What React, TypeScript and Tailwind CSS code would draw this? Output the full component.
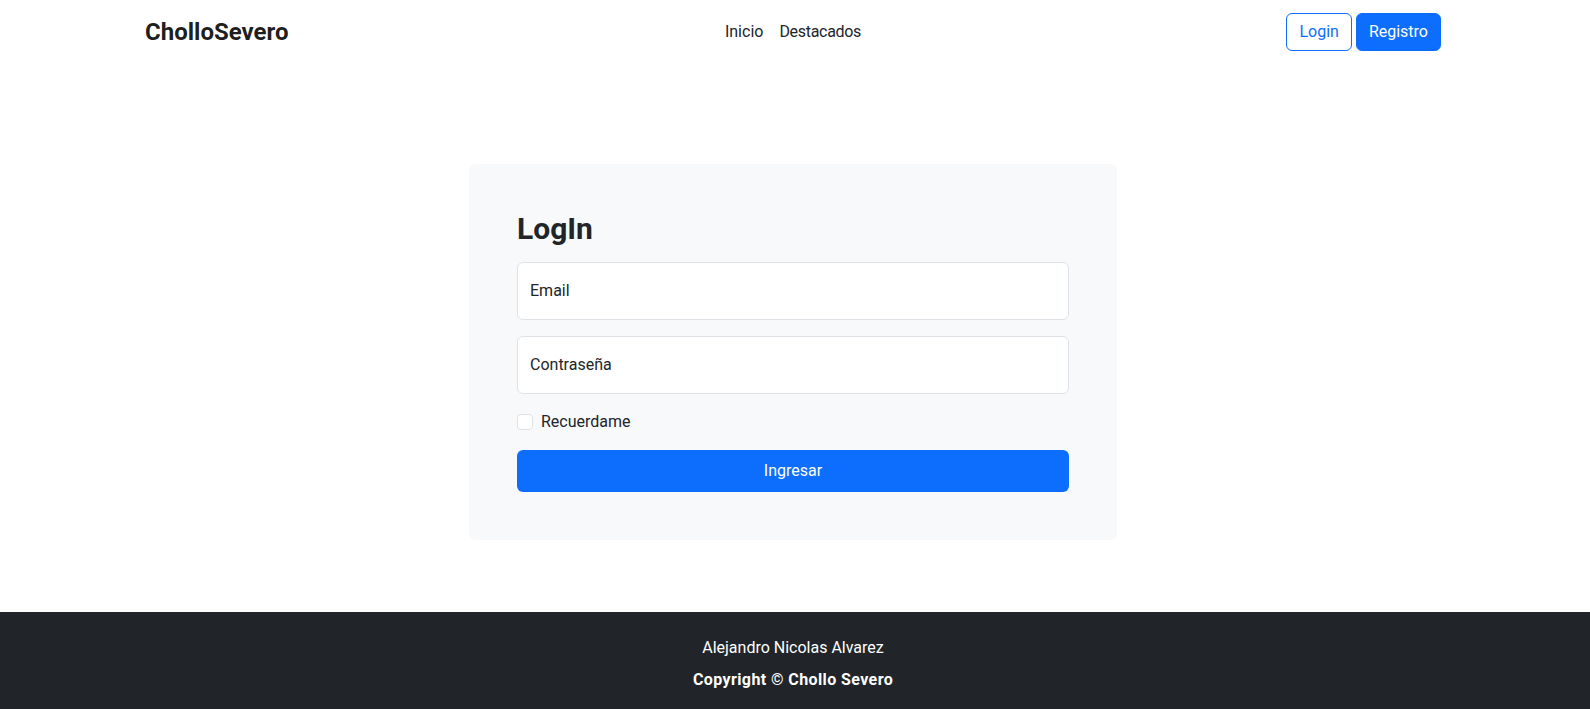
import { useState } from "react";

const font = { fontFamily: '"Segoe UI", Roboto, "Noto Sans", sans-serif' };

function Navbar() {
  return (
    <nav className="bg-white pr-1">
      <div className="mx-auto grid h-16 max-w-[1320px] grid-cols-3 items-center px-3">
        <a href="#" className="text-[24px] font-bold leading-[30px] text-black/90">
          CholloSevero
        </a>
        <ul className="flex items-center justify-center">
          <li>
            <a href="#" className="block px-2 py-2 text-base text-[#212529]">Inicio</a>
          </li>
          <li>
            <a href="#" className="block px-2 py-2 text-base tracking-[-0.3px] text-[#212529]">Destacados</a>
          </li>
        </ul>
        <div className="flex items-center justify-end gap-1">
          <button className="h-[38px] rounded-md border border-[#0d6efd] bg-white px-3 text-base text-[#0d6efd]">
            Login
          </button>
          <button className="h-[38px] rounded-md border border-[#0d6efd] bg-[#0d6efd] px-3 text-base text-white">
            Registro
          </button>
        </div>
      </div>
    </nav>
  );
}

function LoginCard() {
  const [remember, setRemember] = useState(false);

  return (
    <div className="mx-auto w-[648px] rounded-md bg-[#f8f9fa] p-12">
      <h3 className="mb-4 text-[30px] font-bold leading-[33.6px] text-[#212529]">LogIn</h3>
      <input
        type="email"
        placeholder="Email"
        className="mb-4 block h-[58px] w-full rounded-md border border-[#dee2e6] bg-white px-3 text-base text-[#212529] outline-none placeholder:text-[#212529]"
      />
      <input
        type="password"
        placeholder="Contraseña"
        className="mb-4 block h-[58px] w-full rounded-md border border-[#dee2e6] bg-white px-3 text-base text-[#212529] outline-none placeholder:text-[#212529]"
      />
      <label className="mb-4 flex h-6 items-center text-base text-[#212529]">
        <input
          type="checkbox"
          checked={remember}
          onChange={(e) => setRemember(e.target.checked)}
          className="h-4 w-4 appearance-none rounded border border-[#dee2e6] bg-white checked:border-[#0d6efd] checked:bg-[#0d6efd]"
        />
        <span className="ml-2">Recuerdame</span>
      </label>
      <button className="h-[42px] w-full rounded-md bg-[#0d6efd] text-base text-white">
        Ingresar
      </button>
    </div>
  );
}

function Footer() {
  return (
    <footer className="bg-[#212529] pb-6 pr-1 pt-6 text-center text-base leading-6 text-white">
      <p className="mb-2">Alejandro Nicolas Alvarez</p>
      <p className="font-bold tracking-[0.4px]">Copyright © Chollo Severo</p>
    </footer>
  );
}

export default function App() {
  return (
    <div className="min-h-screen bg-white" style={font}>
      <Navbar />
      <main className="pb-[72px] pr-1 pt-[100px]">
        <LoginCard />
      </main>
      <Footer />
    </div>
  );
}
